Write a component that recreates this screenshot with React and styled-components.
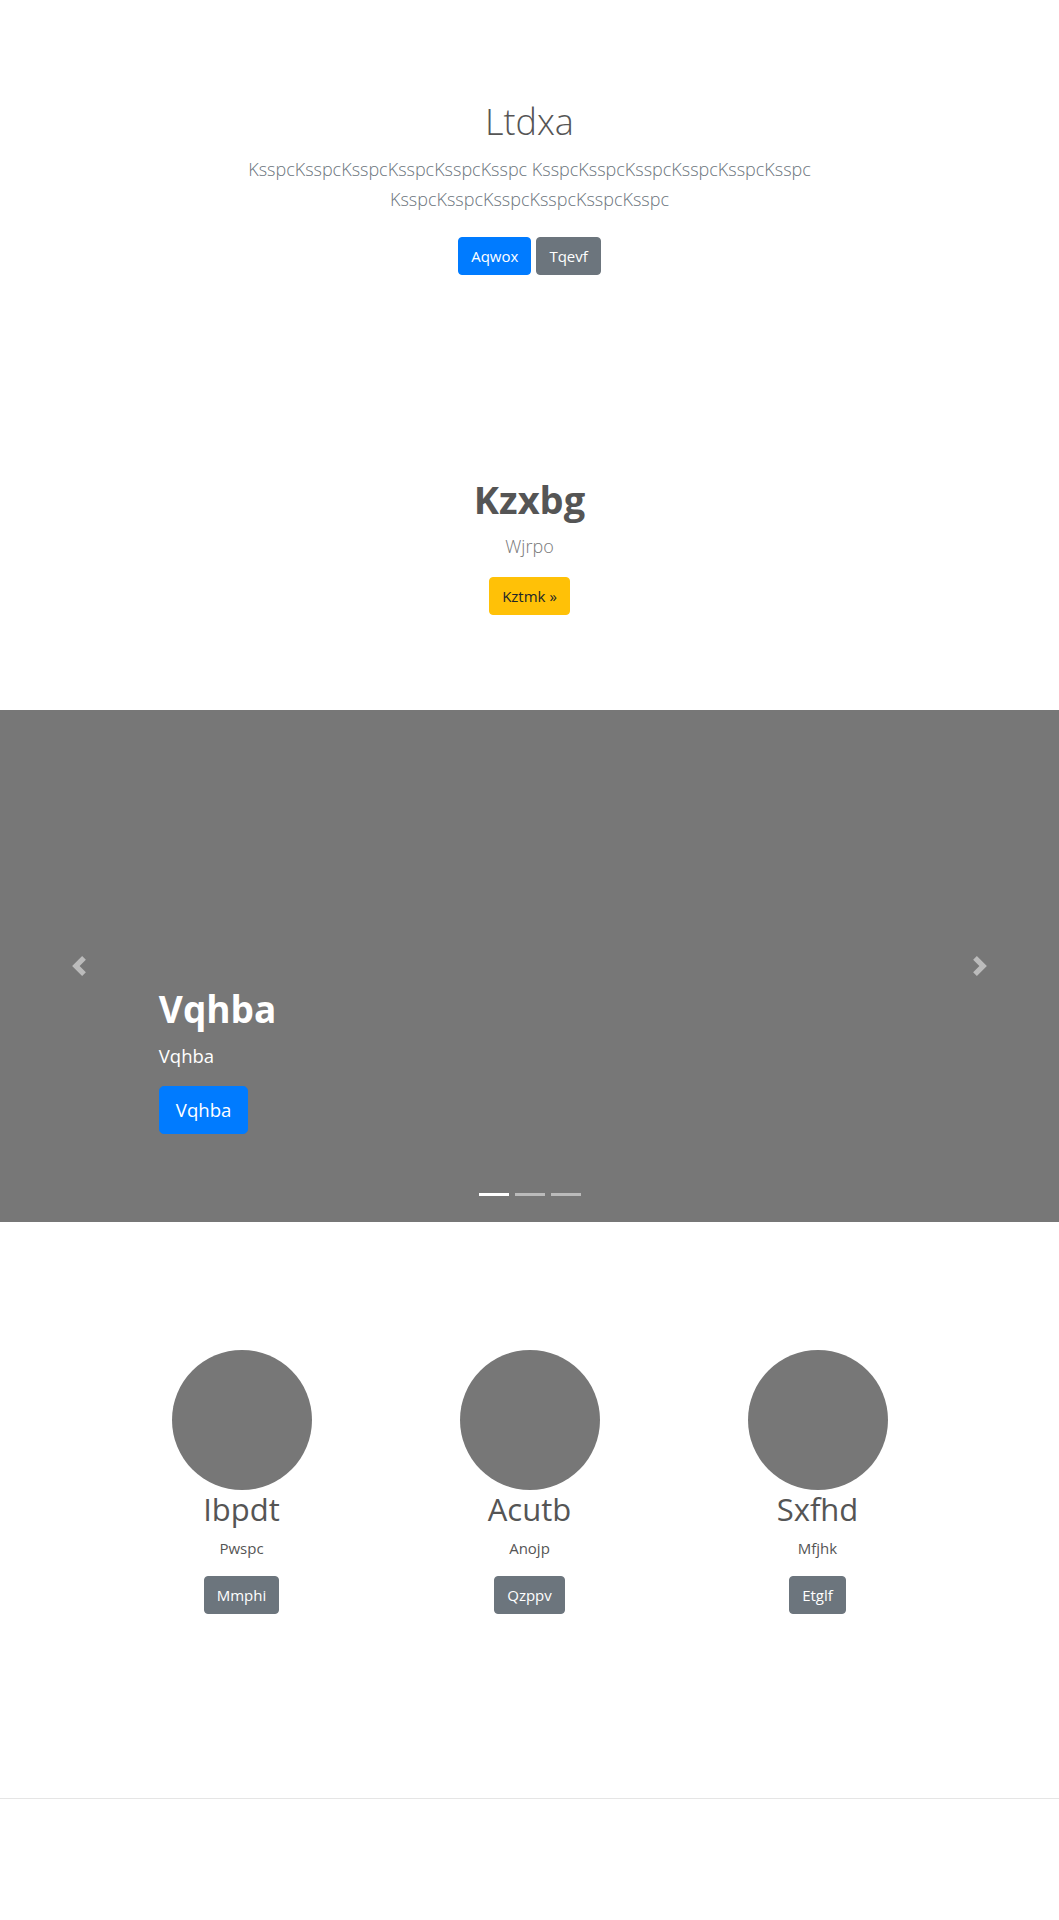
import React from "react";
import styled, { createGlobalStyle } from "styled-components";

const GlobalStyle = createGlobalStyle`
  * { box-sizing: border-box; }
  html, body { margin: 0; padding: 0; background: #fff; }
  body {
    font-family: "Open Sans", "Noto Sans", "Liberation Sans", sans-serif;
    font-size: 16px;
    line-height: 1.5;
    color: #555;
  }
`;

const Page = styled.div`
  display: flex;
  flex-direction: column;
  min-height: 1920px;
`;

const Hero = styled.section`
  padding: 98px 15px 0;
  text-align: center;
`;

const HeroTitle = styled.h1`
  margin: 0 0 8px;
  font-size: 36px;
  font-weight: 300;
  line-height: 48px;
  color: #555;
`;

const Lead = styled.p`
  margin: 0 auto 16px;
  max-width: 610px;
  font-size: 18px;
  font-weight: 300;
  line-height: 30px;
  color: ${(p) => p.$color || "#6c757d"};
`;

const ButtonRow = styled.div`
  display: flex;
  justify-content: center;
  gap: 5px;
  margin-top: ${(p) => p.$top || "0"};
`;

const variants = {
  primary: { bg: "#007bff", fg: "#fff" },
  secondary: { bg: "#6c757d", fg: "#fff" },
  warning: { bg: "#ffc107", fg: "#212529" },
};

const Button = styled.a`
  display: inline-block;
  padding: ${(p) => (p.$lg ? "8px 16px" : "6px 12px")};
  font-size: ${(p) => (p.$lg ? "18.6px" : "15px")};
  line-height: ${(p) => (p.$lg ? "30px" : "24px")};
  font-weight: 400;
  border: 1px solid ${(p) => variants[p.$v].bg};
  border-radius: ${(p) => (p.$lg ? "4.8px" : "4px")};
  background: ${(p) => variants[p.$v].bg};
  color: ${(p) => variants[p.$v].fg};
  text-decoration: none;
  cursor: pointer;
  white-space: nowrap;
`;

const Feature = styled.section`
  padding: 200px 15px 0;
  text-align: center;
`;

const FeatureTitle = styled.h2`
  margin: 0 0 8px;
  font-size: 38px;
  font-weight: 700;
  line-height: 48px;
  color: #555;
`;

const Carousel = styled.div`
  position: relative;
  margin-top: 95px;
  height: 512px;
  background: #777;
  overflow: hidden;
`;

const Caption = styled.div`
  position: absolute;
  left: 15%;
  right: 15%;
  bottom: 48px;
  padding: 20px 0;
  color: #fff;
  text-align: left;
  z-index: 2;
`;

const CaptionTitle = styled.h1`
  margin: 0 0 8px;
  font-size: 37px;
  font-weight: 700;
  line-height: 48px;
`;

const CaptionText = styled.p`
  margin: 0 0 15px;
  font-size: 18.5px;
  line-height: 30px;
`;

const CaptionAction = styled.div`
  display: flex;
  margin-bottom: 20px;
`;

const Control = styled.a`
  position: absolute;
  top: 0;
  bottom: 0;
  ${(p) => (p.$side === "left" ? "left: 0;" : "right: 0;")}
  width: 15%;
  display: flex;
  align-items: center;
  justify-content: center;
  opacity: 0.5;
  color: #fff;
  z-index: 1;
`;

const Indicators = styled.ol`
  position: absolute;
  left: 0;
  right: 0;
  bottom: 26px;
  display: flex;
  justify-content: center;
  gap: 6px;
  margin: 0;
  padding: 0;
  list-style: none;
  z-index: 3;
`;

const Indicator = styled.li`
  width: 30px;
  height: 3px;
  background: #fff;
  opacity: ${(p) => (p.$active ? 1 : 0.5)};
`;

const Marketing = styled.section`
  display: grid;
  grid-template-columns: repeat(3, 288px);
  justify-content: center;
  margin-top: 128px;
  text-align: center;
`;

const Column = styled.div`
  display: flex;
  flex-direction: column;
  align-items: center;
`;

const Avatar = styled.div`
  width: 140px;
  height: 140px;
  border-radius: 50%;
  background: #777;
`;

const ColTitle = styled.h2`
  margin: 0 0 8px;
  font-size: 31px;
  font-weight: 400;
  line-height: 38.4px;
  color: #555;
`;

const ColText = styled.p`
  margin: 0 0 16px;
  font-size: 15px;
  line-height: 24px;
  color: #555;
`;

const Divider = styled.hr`
  margin: 184px 0 0;
  border: 0;
  border-top: 1px solid rgba(0, 0, 0, 0.1);
  width: 100%;
`;

const Chevron = ({ dir }) => (
  <svg width="20" height="20" viewBox="0 0 8 8" fill="currentColor">
    {dir === "left" ? (
      <path d="M5.25 0l-4 4 4 4 1.5-1.5L4.25 4l2.5-2.5L5.25 0z" />
    ) : (
      <path d="M2.75 0l-1.5 1.5L3.75 4l-2.5 2.5L2.75 8l4-4-4-4z" />
    )}
  </svg>
);

const team = [
  { name: "Ibpdt", role: "Pwspc", action: "Mmphi" },
  { name: "Acutb", role: "Anojp", action: "Qzppv" },
  { name: "Sxfhd", role: "Mfjhk", action: "Etglf" },
];

export default function App() {
  return (
    <Page>
      <GlobalStyle />
      <Hero>
        <HeroTitle>Ltdxa</HeroTitle>
        <Lead>
          KsspcKsspcKsspcKsspcKsspcKsspc KsspcKsspcKsspcKsspcKsspcKsspc
          KsspcKsspcKsspcKsspcKsspcKsspc
        </Lead>
        <ButtonRow $top="23px">
          <Button $v="primary">Aqwox</Button>
          <Button $v="secondary">Tqevf</Button>
        </ButtonRow>
      </Hero>

      <Feature>
        <FeatureTitle>Kzxbg</FeatureTitle>
        <Lead $color="#777">Wjrpo</Lead>
        <ButtonRow>
          <Button $v="warning">Kztmk »</Button>
        </ButtonRow>
      </Feature>

      <Carousel>
        <Indicators>
          <Indicator $active />
          <Indicator />
          <Indicator />
        </Indicators>
        <Caption>
          <CaptionTitle>Vqhba</CaptionTitle>
          <CaptionText>Vqhba</CaptionText>
          <CaptionAction>
            <Button $v="primary" $lg>
              Vqhba
            </Button>
          </CaptionAction>
        </Caption>
        <Control $side="left">
          <Chevron dir="left" />
        </Control>
        <Control $side="right">
          <Chevron dir="right" />
        </Control>
      </Carousel>

      <Marketing>
        {team.map((m) => (
          <Column key={m.name}>
            <Avatar />
            <ColTitle>{m.name}</ColTitle>
            <ColText>{m.role}</ColText>
            <Button $v="secondary">{m.action}</Button>
          </Column>
        ))}
      </Marketing>

      <Divider />
    </Page>
  );
}
